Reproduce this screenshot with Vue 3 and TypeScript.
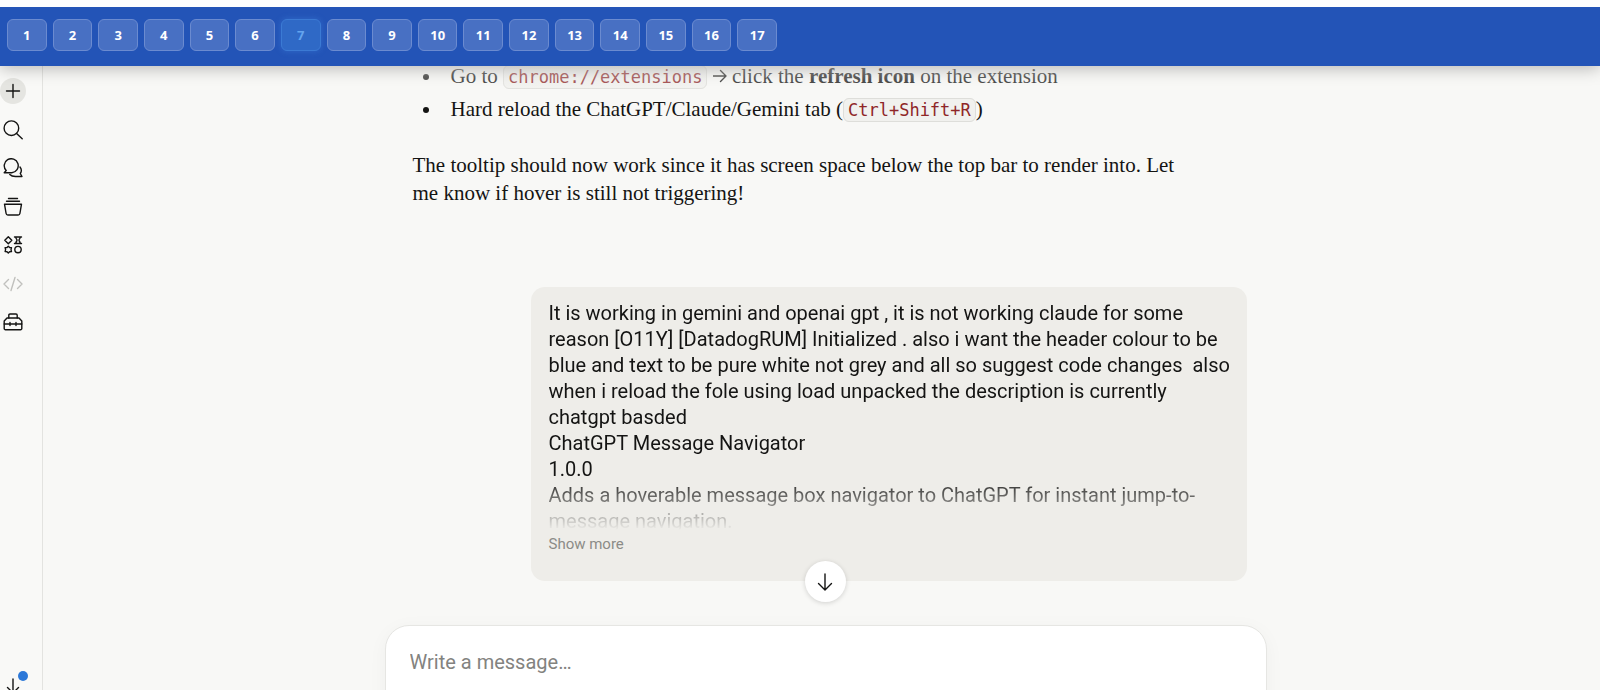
<script setup lang="ts">
import { ref } from 'vue'

const messages = Array.from({ length: 17 }, (_, i) => i + 1)
const active = ref<number>(7)
const draft = ref<string>('')

const prompt = `It is working in gemini and openai gpt , it is not working claude for some reason [O11Y] [DatadogRUM] Initialized . also i want the header colour to be blue and text to be pure white not grey and all so suggest code changes  also when i reload the fole using load unpacked the description is currently chatgpt basded
ChatGPT Message Navigator
1.0.0
Adds a hoverable message box navigator to ChatGPT for instant jump-to-message navigation.`
</script>

<template>
  <div class="app">
    <header class="navigator">
      <nav class="boxes" aria-label="Messages">
        <button
          v-for="n in messages"
          :key="n"
          type="button"
          class="box"
          :class="{ active: n === active }"
          @click="active = n"
        >{{ n }}</button>
      </nav>
    </header>

    <div class="body">
      <aside class="sidebar">
        <nav class="tools" aria-label="Sidebar">
          <button type="button" class="tool round" aria-label="New chat">
            <svg viewBox="0 0 20 20"><path d="M10 3.500v13M3.500 10h13" /></svg>
          </button>
          <button type="button" class="tool" aria-label="Search">
            <svg viewBox="0 0 20 20"><circle cx="8.4" cy="8.2" r="7.3" /><path d="M13.600 13.500l5.600 5.300" /></svg>
          </button>
          <button type="button" class="tool" aria-label="Chats">
            <svg viewBox="0 0 20 20">
              <path d="M3.200 12.600A7 7 0 1 1 8.800 14.700H1.200Z" />
              <path d="M17 9c1.700 2.200 1.500 4.800.3 6.500l1.700 3H12.500c-2.600 0-4.500-.7-5.700-2" />
            </svg>
          </button>
          <button type="button" class="tool" aria-label="Projects">
            <svg viewBox="0 0 20 20">
              <path d="M5.500 1.500h9M3.500 4.300h13" />
              <path d="M1.500 7.200h17l-1.600 9.300a1.800 1.800 0 0 1-1.800 1.500H4.900a1.800 1.800 0 0 1-1.800-1.500Z" />
            </svg>
          </button>
          <button type="button" class="tool" aria-label="Artifacts">
            <svg viewBox="0 0 20 20">
              <path d="M5.300 1.700l3.500 3.500-3.500 3.500-3.500-3.500Z" />
              <path d="M11.500 2h7M11.500 8.500h7M12.800 2c0 2 1.200 2.200 1.200 3.200s-1.200 1.300-1.200 3.300M17.200 2c0 2-1.200 2.200-1.200 3.200s1.200 1.300 1.200 3.300" />
              <path d="M5.300 11.200l1.300 1.300 1.900.1-.5 2 .5 2-1.900.1-1.300 1.300-1.300-1.300-1.900-.1.500-2-.5-2 1.900-.1Z" />
              <circle cx="15" cy="14.600" r="3.200" />
            </svg>
          </button>
          <button type="button" class="tool faded" aria-label="Code">
            <svg viewBox="0 0 20 20"><path d="M5.500 5.500L1 10l4.500 4.500M14.500 5.500L19 10l-4.500 4.500M12 3.500L8 16.500" /></svg>
          </button>
          <button type="button" class="tool" aria-label="Toolbox">
            <svg viewBox="0 0 20 20">
              <path d="M5.800 6V3.200A1.200 1.200 0 0 1 7 2h6a1.200 1.200 0 0 1 1.200 1.200V6" />
              <path d="M4 6h12l2.800 3v7.500a1.200 1.200 0 0 1-1.200 1.200H2.400a1.200 1.200 0 0 1-1.200-1.200V9Z" />
              <path d="M1.200 12h17.600M7 10.500v3M13 10.500v3" />
            </svg>
          </button>
        </nav>
        <button type="button" class="tool download" aria-label="Download app">
          <svg viewBox="0 0 20 20"><path d="M10 2v13.500M4.500 10.500l5.500 5.500 5.500-5.500" /></svg>
          <span class="dot"></span>
        </button>
      </aside>

      <main class="chat">
        <section class="thread">
          <article class="reply">
            <ul>
              <li>Go to <code>chrome://extensions</code> <svg class="arrow" viewBox="0 0 14 14"><path d="M0 7h13M7.500 1.500L13 7l-5.500 5.500" /></svg> click the <strong>refresh icon</strong> on the extension</li>
              <li>Hard reload the ChatGPT/Claude/Gemini tab (<code>Ctrl+Shift+R</code>)</li>
            </ul>
            <p>The tooltip should now work since it has screen space below the top bar to render into. Let me know if hover is still not triggering!</p>
          </article>
          <article class="bubble">
            <div class="clipped">{{ prompt }}</div>
            <button type="button" class="more">Show more</button>
          </article>
        </section>

        <form class="composer-row" @submit.prevent>
          <button type="button" class="to-end" aria-label="Scroll to bottom">
            <svg viewBox="0 0 20 20"><path d="M10 2v15.500M3.500 11.500l6.500 6.500 6.500-6.500" /></svg>
          </button>
          <div class="composer">
            <textarea v-model="draft" rows="1" placeholder="Write a message…" aria-label="Write a message"></textarea>
          </div>
        </form>
      </main>
    </div>
  </div>
</template>

<style>
body {
  background: #f8f8f6;
}
</style>

<style scoped>
.app {
  display: flex;
  flex-direction: column;
  height: 100vh;
  overflow: hidden;
  background: #f8f8f6;
  color: #141413;
  font-family: Roboto, "Liberation Sans", sans-serif;
}

button {
  padding: 0;
  border: 0;
  background: none;
  color: inherit;
  font: inherit;
  cursor: pointer;
}

svg {
  display: block;
  width: 20px;
  height: 20px;
  fill: none;
  stroke: currentColor;
  stroke-width: 1.4;
  stroke-linecap: round;
  stroke-linejoin: round;
}

.navigator {
  position: relative;
  z-index: 2;
  padding: 12px 7px 15px;
  border-top: 7px solid #fdfefe;
  background: #2354b7;
  box-shadow: 0 2px 16px rgba(0, 0, 0, 0.28);
}

.boxes {
  display: grid;
  grid-template-columns: repeat(17, 1fr);
  gap: 6px;
  max-width: 770px;
}

.box {
  height: 32px;
  border: 1px solid #6b8bd0;
  border-radius: 6px;
  background: #4870c3;
  color: #fff;
  font-family: "Noto Sans", sans-serif;
  font-size: 13px;
  font-weight: 700;
}

.box.active {
  border-color: #3b7ad4;
  background: #2f69c6;
  box-shadow: 0 0 6px rgba(70, 140, 230, 0.4);
  color: #64a4ee;
}

.body {
  display: flex;
  flex: 1;
  min-height: 0;
}

.sidebar {
  display: flex;
  flex-direction: column;
  justify-content: space-between;
  box-sizing: border-box;
  width: 43px;
  padding-top: 12px;
  border-right: 1px solid #e3e3e0;
  background: #f9f9f7;
  overflow: hidden;
}

.tools {
  display: flex;
  flex-direction: column;
  justify-content: space-between;
  height: 257px;
}

.tool {
  position: relative;
  display: grid;
  place-items: center;
  width: 26px;
  height: 26px;
}

.round {
  border-radius: 50%;
  background: #e5e5e1;
}

.faded {
  color: #c0c0bd;
}

.download {
  flex-shrink: 0;
  margin-bottom: -10px;
}

.dot {
  position: absolute;
  top: -3px;
  left: 18px;
  width: 10px;
  height: 10px;
  border-radius: 50%;
  background: #2c78d8;
}

.chat {
  position: relative;
  display: flex;
  flex: 1;
  flex-direction: column;
  min-width: 0;
}

.chat::before {
  content: "";
  position: absolute;
  z-index: 1;
  top: 0;
  left: 0;
  right: 0;
  height: 32px;
  background: linear-gradient(rgba(248, 248, 246, 0.5), rgba(248, 248, 246, 0));
}

.thread {
  display: flex;
  flex: 1;
  flex-direction: column;
  justify-content: flex-end;
  box-sizing: border-box;
  width: 100%;
  max-width: 850px;
  min-height: 0;
  margin: 0 auto;
  padding: 0 0 44px 16px;
  overflow: hidden;
}

.reply {
  flex-shrink: 0;
  margin-bottom: 80px;
  font-family: "Liberation Serif", serif;
  font-size: 21px;
  line-height: 28px;
}

.reply ul {
  display: grid;
  gap: 5px;
  margin: 0 0 28px;
  padding-left: 29px;
}

.reply li {
  padding-left: 9px;
}

.reply p {
  max-width: 780px;
  margin: 0;
}

.reply code {
  padding: 1px 4px;
  border: 1px solid #dededa;
  border-radius: 6px;
  background: #f1f1ee;
  color: #8f2627;
  font-family: "DejaVu Sans Mono", monospace;
  font-size: 17px;
  line-height: 20px;
}

.arrow {
  display: inline-block;
  width: 14px;
  height: 14px;
}

.bubble {
  flex-shrink: 0;
  align-self: flex-end;
  box-sizing: border-box;
  width: 716px;
  max-width: 100%;
  padding: 13px 14px 23px 18px;
  border-radius: 14px;
  background: #eeede9;
}

.clipped {
  height: 230px;
  overflow: hidden;
  font-size: 20px;
  line-height: 26px;
  white-space: pre-wrap;
  mask-image: linear-gradient(#000 175px, transparent);
}

.more {
  display: block;
  color: #8b8b87;
  font-size: 15px;
  line-height: 28px;
}

.composer-row {
  position: relative;
  box-sizing: border-box;
  width: 100%;
  max-width: 890px;
  height: 65px;
  margin: 0 auto;
  padding-left: 8px;
}

.composer {
  box-sizing: border-box;
  height: 120px;
  padding: 23px 24px;
  border: 1px solid #e6e6e3;
  border-radius: 24px;
  background: #fff;
  box-shadow: 0 4px 20px rgba(0, 0, 0, 0.04);
}

.composer textarea {
  display: block;
  width: 100%;
  padding: 0;
  border: 0;
  outline: 0;
  background: none;
  color: inherit;
  font: inherit;
  font-size: 20px;
  line-height: 26px;
  resize: none;
}

.composer textarea::placeholder {
  color: #83837f;
  opacity: 1;
}

.to-end {
  position: absolute;
  top: -64px;
  left: calc(50% - 17px);
  display: grid;
  place-items: center;
  width: 41px;
  height: 41px;
  border-radius: 50%;
  background: #fff;
  box-shadow: 0 1px 5px rgba(0, 0, 0, 0.16);
}
</style>
